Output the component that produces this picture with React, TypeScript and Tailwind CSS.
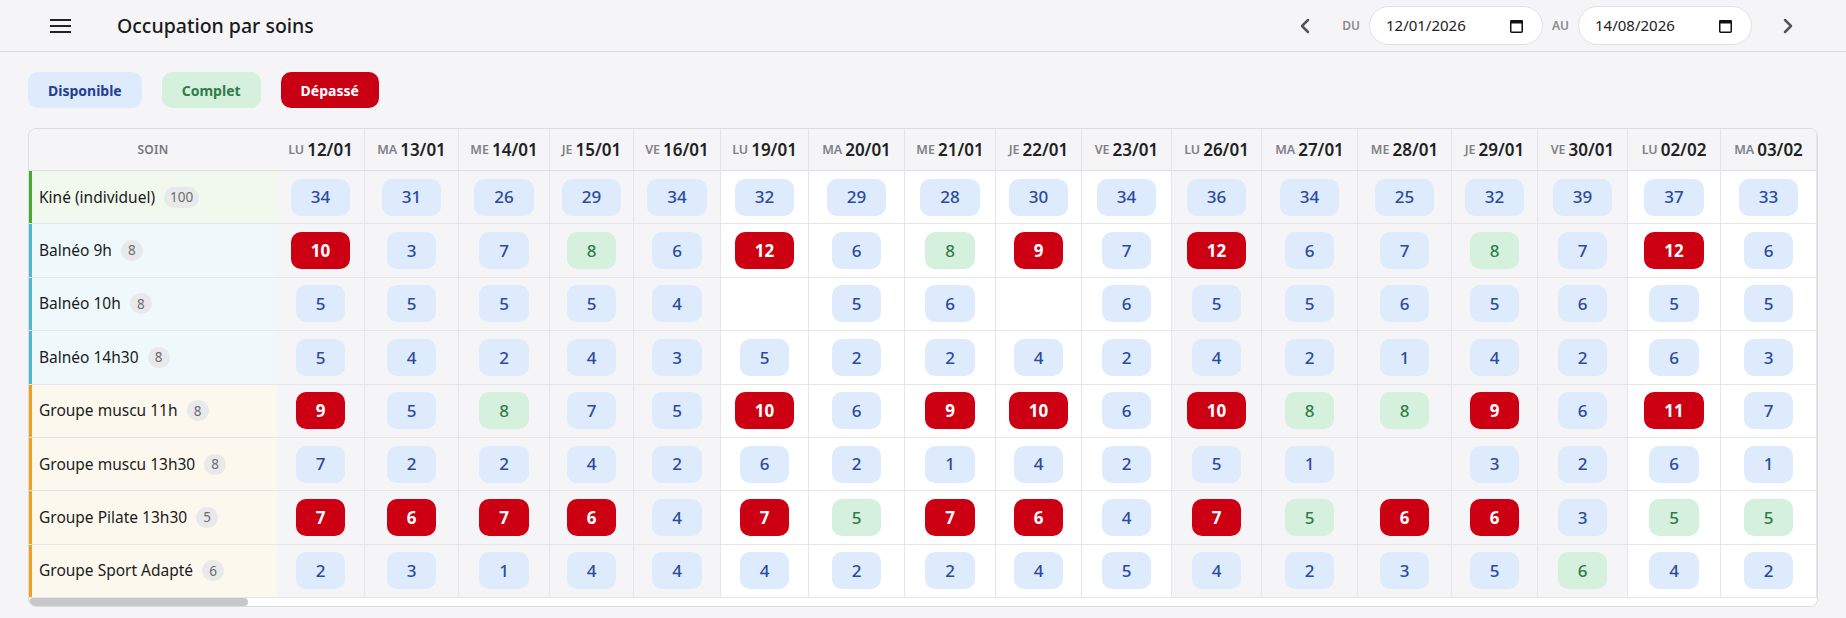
import React from 'react';
import { ChevronLeft, ChevronRight } from 'lucide-react';

type Day = { d: string; date: string; w: string; alt: boolean };

const days: Day[] = [
  { d: 'Lu', date: '12/01', w: 'w-[88px]', alt: true },
  { d: 'Ma', date: '13/01', w: 'w-[94px]', alt: true },
  { d: 'Me', date: '14/01', w: 'w-[91px]', alt: true },
  { d: 'Je', date: '15/01', w: 'w-[84px]', alt: true },
  { d: 'Ve', date: '16/01', w: 'w-[87px]', alt: true },
  { d: 'Lu', date: '19/01', w: 'w-[88px]', alt: false },
  { d: 'Ma', date: '20/01', w: 'w-[96px]', alt: false },
  { d: 'Me', date: '21/01', w: 'w-[91px]', alt: false },
  { d: 'Je', date: '22/01', w: 'w-[86px]', alt: false },
  { d: 'Ve', date: '23/01', w: 'w-[90px]', alt: false },
  { d: 'Lu', date: '26/01', w: 'w-[90px]', alt: true },
  { d: 'Ma', date: '27/01', w: 'w-[96px]', alt: true },
  { d: 'Me', date: '28/01', w: 'w-[94px]', alt: true },
  { d: 'Je', date: '29/01', w: 'w-[86px]', alt: true },
  { d: 'Ve', date: '30/01', w: 'w-[90px]', alt: true },
  { d: 'Lu', date: '02/02', w: 'w-[93px]', alt: false },
  { d: 'Ma', date: '03/02', w: 'w-[96px]', alt: false },
];

type Kind = 'kine' | 'balneo' | 'groupe';

const kinds: Record<Kind, string> = {
  kine: 'border-l-[#45ad2d] bg-[#f1f9ef]',
  balneo: 'border-l-[#4db9d3] bg-[#eff9fb]',
  groupe: 'border-l-[#f0a01f] bg-[#fcf8ee]',
};

const soins: { name: string; cap: number; kind: Kind; values: (number | null)[] }[] = [
  { name: 'Kiné (individuel)', cap: 100, kind: 'kine', values: [34, 31, 26, 29, 34, 32, 29, 28, 30, 34, 36, 34, 25, 32, 39, 37, 33] },
  { name: 'Balnéo 9h', cap: 8, kind: 'balneo', values: [10, 3, 7, 8, 6, 12, 6, 8, 9, 7, 12, 6, 7, 8, 7, 12, 6] },
  { name: 'Balnéo 10h', cap: 8, kind: 'balneo', values: [5, 5, 5, 5, 4, null, 5, 6, null, 6, 5, 5, 6, 5, 6, 5, 5] },
  { name: 'Balnéo 14h30', cap: 8, kind: 'balneo', values: [5, 4, 2, 4, 3, 5, 2, 2, 4, 2, 4, 2, 1, 4, 2, 6, 3] },
  { name: 'Groupe muscu 11h', cap: 8, kind: 'groupe', values: [9, 5, 8, 7, 5, 10, 6, 9, 10, 6, 10, 8, 8, 9, 6, 11, 7] },
  { name: 'Groupe muscu 13h30', cap: 8, kind: 'groupe', values: [7, 2, 2, 4, 2, 6, 2, 1, 4, 2, 5, 1, null, 3, 2, 6, 1] },
  { name: 'Groupe Pilate 13h30', cap: 5, kind: 'groupe', values: [7, 6, 7, 6, 4, 7, 5, 7, 6, 4, 7, 5, 6, 6, 3, 5, 5] },
  { name: 'Groupe Sport Adapté', cap: 6, kind: 'groupe', values: [2, 3, 1, 4, 4, 4, 2, 2, 4, 5, 4, 2, 3, 5, 6, 4, 2] },
];

const Badge = ({ value, cap }: { value: number; cap: number }) => {
  let tone = 'bg-[#deebfc] text-[#2b4a9c] font-medium';
  if (value > cap) tone = 'bg-[#cc0012] text-white font-bold';
  else if (value === cap) tone = 'bg-[#d5f0dc] text-[#2f7d49] font-medium';
  return (
    <span className={`h-[37px] px-5 rounded-[10px] flex items-center justify-center text-[17px] ${tone}`}>
      {value}
    </span>
  );
};

const DateField = ({ value }: { value: string }) => (
  <div className="w-[174px] h-[39px] rounded-full bg-white border border-[#e1e1e4] pl-4 pr-[19px] flex items-center justify-between">
    <span className="text-[15px] text-[#222]">{value}</span>
    <svg width="13" height="14" viewBox="0 0 13 14">
      <rect x="0.75" y="1.75" width="11.5" height="11.5" rx="1" fill="none" stroke="#111" strokeWidth="1.5" />
      <rect x="0.5" y="1" width="12" height="3.5" fill="#111" />
    </svg>
  </div>
);

const App: React.FC = () => {
  return (
    <div className="min-h-screen w-full bg-[#f5f5f7] font-['Noto_Sans','Open_Sans',sans-serif] text-[#1d1d1f]">
      <header className="h-[52px] border-b border-[#dcdcdf] flex items-center pl-10 pr-[38px]">
        <button className="w-10 h-10 flex items-center justify-center">
          <svg width="21" height="14" viewBox="0 0 21 14">
            <path d="M0 1h21M0 7h21M0 13h21" stroke="#222" strokeWidth="2" />
          </svg>
        </button>
        <h1 className="ml-[37px] text-[19.5px] font-medium text-[#1a1a1a]">Occupation par soins</h1>

        <div className="ml-auto flex items-center">
          <button className="w-10 h-10 flex items-center justify-center text-[#555]">
            <ChevronLeft size={24} strokeWidth={2.5} />
          </button>
          <span className="ml-[17px] text-[12px] font-semibold text-[#8a8a8f]">DU</span>
          <div className="ml-[9px]">
            <DateField value="12/01/2026" />
          </div>
          <span className="ml-[9px] text-[12px] font-semibold text-[#8a8a8f]">AU</span>
          <div className="ml-[9px]">
            <DateField value="14/08/2026" />
          </div>
          <button className="ml-4 w-10 h-10 flex items-center justify-center text-[#555]">
            <ChevronRight size={24} strokeWidth={2.5} />
          </button>
        </div>
      </header>

      <main className="px-7 pt-5">
        <div className="flex items-center gap-5">
          <span className="h-9 px-5 rounded-[10px] bg-[#deebfc] text-[#23408f] text-[14px] font-bold flex items-center">Disponible</span>
          <span className="h-9 px-5 rounded-[10px] bg-[#d5f0dc] text-[#2f7d49] text-[14px] font-bold flex items-center">Complet</span>
          <span className="h-9 px-5 rounded-[10px] bg-[#c90014] text-white text-[14px] font-bold flex items-center">Dépassé</span>
        </div>

        <div className="mt-5 border border-[#dcdcdf] rounded-lg overflow-hidden bg-white">
          <div className="flex h-[42px] border-b border-[#dedee2] bg-[#f5f5f7] w-max">
            <div className="w-[248px] shrink-0 flex items-center justify-center text-[12px] font-semibold tracking-wide text-[#77777c]">
              SOIN
            </div>
            {days.map((day) => (
              <div
                key={day.date}
                className={`${day.w} shrink-0 border-r border-[#e5e5e8] flex items-center justify-center whitespace-nowrap`}
              >
                <span className="text-[12.5px] font-semibold uppercase text-[#808086] mr-[3px] mt-[2px]">{day.d}</span>
                <span className="text-[17px] font-semibold text-[#222]">{day.date}</span>
              </div>
            ))}
          </div>

          {soins.map((soin) => (
            <div key={soin.name} className="flex h-[53.4px] border-b border-[#e6e6e9] w-max">
              <div className={`w-[248px] shrink-0 border-l-[3px] pl-[7px] flex items-center gap-[9px] ${kinds[soin.kind]}`}>
                <span className="text-[15.5px] text-[#1b1b1b] whitespace-nowrap">{soin.name}</span>
                <span className="min-w-[22px] h-[21px] px-[6px] rounded-full bg-[#e9e9eb] text-[13.5px] text-[#6d6d72] flex items-center justify-center">
                  {soin.cap}
                </span>
              </div>
              {days.map((day, i) => {
                const v = soin.values[i];
                return (
                  <div
                    key={day.date}
                    className={`${day.w} shrink-0 border-r border-[#e6e6e9] flex items-center justify-center ${day.alt ? 'bg-[#f5f5f7]' : 'bg-white'}`}
                  >
                    {v !== null && <Badge value={v} cap={soin.cap} />}
                  </div>
                );
              })}
            </div>
          ))}

          <div className="h-2 bg-white">
            <div className="h-2 w-[219px] rounded-full bg-[#c8c8cb]" />
          </div>
        </div>
      </main>
    </div>
  );
};

export default App;
